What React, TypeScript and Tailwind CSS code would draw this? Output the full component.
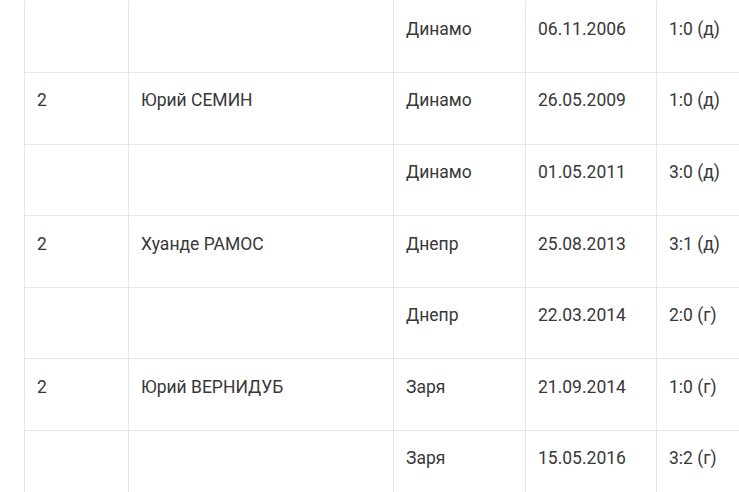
import React from "react";

const rows: [string, string, string, string, string][] = [
  ["", "", "Динамо", "06.11.2006", "1:0 (д)"],
  ["2", "Юрий СЕМИН", "Динамо", "26.05.2009", "1:0 (д)"],
  ["", "", "Динамо", "01.05.2011", "3:0 (д)"],
  ["2", "Хуанде РАМОС", "Днепр", "25.08.2013", "3:1 (д)"],
  ["", "", "Днепр", "22.03.2014", "2:0 (г)"],
  ["2", "Юрий ВЕРНИДУБ", "Заря", "21.09.2014", "1:0 (г)"],
  ["", "", "Заря", "15.05.2016", "3:2 (г)"],
];

export default function App() {
  return (
    <div
      className="w-[739px] h-[492px] overflow-hidden bg-white pt-[1.4px] text-[#383838] text-[17.5px]"
      style={{ fontFamily: "Roboto, 'Noto Sans', sans-serif" }}
    >
      <div className="ml-[24px] w-[800px]">
        {rows.map((r, i) => (
          <div
            key={i}
            className="grid grid-cols-[104px_265px_132px_131px_1fr] h-[71.6px] border-b border-[#e6e6e6]"
          >
            {r.map((c, j) => (
              <div
                key={j}
                className="border-l border-[#e6e6e6] pl-[12px] pt-[15.5px] leading-6 whitespace-nowrap"
              >
                {c}
              </div>
            ))}
          </div>
        ))}
      </div>
    </div>
  );
}
